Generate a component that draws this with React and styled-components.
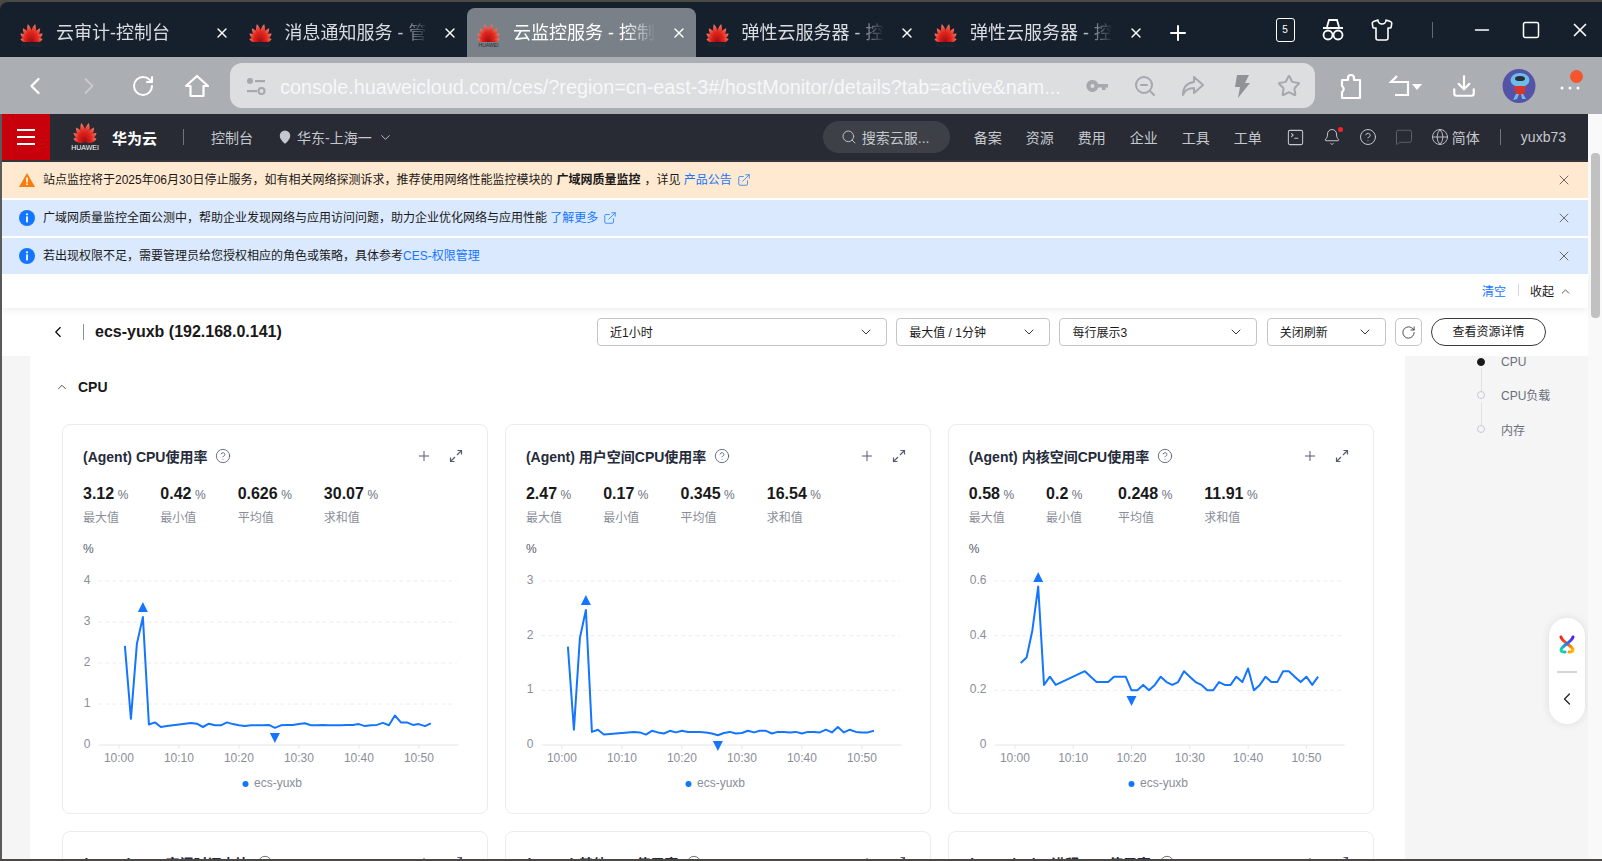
import React from "react";
import styled, { createGlobalStyle } from "styled-components";
import {
  ChevronLeft, ChevronRight, ChevronDown, ChevronUp, RotateCw, ZoomOut, Star,
  Download, Search, MapPin, SquareTerminal, Bell, CircleHelp, Globe, X, Plus, Minus, Square,
  ExternalLink, Shirt, MessageSquare,
} from "lucide-react";

const FONT = `"Liberation Sans", "Noto Sans CJK SC", sans-serif`;

const GlobalStyle = createGlobalStyle`
  html, body { margin: 0; padding: 0; background: #4a4845; }
  body { font-family: ${FONT}; overflow: hidden; }
  * { box-sizing: border-box; }
`;

const Window = styled.div`
  width: 1602px;
  height: 861px;
  overflow: hidden;
  padding: 2px 0;
  display: flex;
  flex-direction: column;
`;

const TabBar = styled.div`
  height: 55px;
  flex: none;
  display: flex;
  align-items: flex-end;
  padding-left: 10px;
  background: #16202d;
  border-top-left-radius: 8px;
`;

const Tab = styled.div`
  width: 228.5px;
  height: 49px;
  flex: none;
  display: flex;
  align-items: center;
  padding: 0 9px 0 9px;
  border-radius: 8px 8px 0 0;
  background: ${(p) => (p.$active ? "#7a8087" : "transparent")};
  color: ${(p) => (p.$active ? "#ffffff" : "#d9dce0")};
`;

const TabLogo = styled.div`
  width: 25px;
  padding-top: 6px;
  display: flex;
  flex-direction: column;
  align-items: center;
  color: #2b2b33;
`;

const TabWord = styled.span`
  font-size: 5px;
  line-height: 6px;
  white-space: nowrap;
`;

const TabTitle = styled.div`
  width: 146px;
  margin-left: 12px;
  font-size: 18px;
  line-height: 26px;
  white-space: nowrap;
  -webkit-mask-image: linear-gradient(to right, #000 76%, transparent 98%);
  mask-image: linear-gradient(to right, #000 76%, transparent 98%);
`;

const TabClose = styled.div`
  margin-left: auto;
  display: flex;
  color: #fff;
`;

const NewTab = styled.div`
  margin-left: 13px;
  height: 49px;
  display: flex;
  align-items: center;
  color: #fff;
`;

const WindowButtons = styled.div`
  margin-left: auto;
  margin-right: -2px;
  height: 55px;
  display: flex;
  align-items: center;
  color: #fff;
`;

const WinButton = styled.div`
  width: ${(p) => p.$w || 50}px;
  display: flex;
  justify-content: center;
`;

const BadgeTab = styled.div`
  width: 19px;
  height: 24px;
  border: 1.5px solid #fff;
  border-radius: 3px;
  font-size: 10px;
  line-height: 21px;
  text-align: center;
`;

const WinSep = styled.div`
  width: 1px;
  height: 16px;
  background: #667;
`;

const ToolBar = styled.div`
  height: 57px;
  flex: none;
  display: flex;
  align-items: center;
  padding-left: 8px;
  background: #abaeb2;
  color: #fff;
`;

const NavButton = styled.div`
  width: ${(p) => p.$w || 54}px;
  display: flex;
  justify-content: center;
  color: ${(p) => (p.$dim ? "#c8cacd" : "#fff")};
`;

const AddressBar = styled.div`
  width: 1085px;
  height: 45px;
  margin: 0 10px 0 6px;
  padding: 0 14px 0 16px;
  flex: none;
  display: flex;
  align-items: center;
  border-radius: 12px;
  background: #dcdee0;
`;

const UrlText = styled.div`
  margin-left: 14px;
  padding-top: 3px;
  width: 795px;
  flex: none;
  font-size: 19.8px;
  color: #f7f8f9;
  white-space: nowrap;
`;

const AddressIcons = styled.div`
  margin-left: auto;
  display: flex;
  align-items: center;
  gap: 24px;
  color: #a5a8ac;
`;

const Avatar = styled.svg`
  width: 34px;
  height: 34px;
  margin: 0 21px 0 7px;
`;

const MenuDots = styled.div`
  position: relative;
  width: 28px;
  height: 28px;
`;

const MenuDot = styled.span`
  position: absolute;
  right: 2px;
  top: -2px;
  width: 13px;
  height: 13px;
  border-radius: 50%;
  background: #f4552a;
`;

const Page = styled.div`
  flex: 1;
  min-height: 0;
  display: flex;
  background: #fff;
`;

const Gutter = styled.div`
  width: 2px;
  flex: none;
  background: #5a5a5a;
`;

const Main = styled.div`
  width: 1586px;
  flex: none;
  display: flex;
  flex-direction: column;
  min-height: 0;
`;

const ScrollTrack = styled.div`
  width: 14px;
  flex: none;
  background: #f9f9f9;
  padding: 39px 2px 0 3px;
`;

const ScrollThumb = styled.div`
  height: 165px;
  border-radius: 4px;
  background: #c1c1c1;
`;

const Header = styled.header`
  height: 48px;
  flex: none;
  display: flex;
  align-items: center;
  padding-right: 22px;
  background: #282b33;
  border-bottom: 2px solid #33353b;
  color: #c5c8ce;
  font-size: 14px;
`;

const MenuBox = styled.div`
  width: 48px;
  height: 46px;
  display: flex;
  align-items: center;
  justify-content: center;
  background: #c7000b;
  color: #fff;
`;

const HeaderLogo = styled.div`
  margin-left: 21px;
  width: 28px;
  display: flex;
  flex-direction: column;
  align-items: center;
  color: #fff;
`;

const LogoWord = styled.span`
  font-size: 7px;
  line-height: 9px;
  white-space: nowrap;
`;

const Brand = styled.div`
  margin-left: 13px;
  font-size: 15px;
  font-weight: 700;
  color: #fff;
`;

const HeaderDivider = styled.div`
  width: 1px;
  height: 16px;
  margin: ${(p) => p.$m || "0 27px 0 26px"};
  background: #70737a;
`;

const Region = styled.div`
  margin-left: 25px;
  display: flex;
  align-items: center;
  gap: 5px;
`;

const RegionCaret = styled(ChevronDown)`
  margin-left: 1px;
`;

const SearchPill = styled.div`
  margin-left: auto;
  width: 127px;
  height: 32px;
  display: flex;
  align-items: center;
  gap: 5px;
  padding-left: 18px;
  border-radius: 16px;
  background: #3d4047;
`;

const NavLinks = styled.nav`
  margin-left: 24px;
  display: flex;
  gap: 24px;
`;

const HeaderIcons = styled.div`
  margin-left: 24px;
  display: flex;
  align-items: center;
  gap: 18px;
`;

const BellWrap = styled.div`
  position: relative;
  display: flex;
`;

const RedDot = styled.span`
  position: absolute;
  top: -1px;
  right: -2px;
  width: 5px;
  height: 5px;
  border-radius: 50%;
  background: #f5222d;
`;

const DimIcon = styled.div`
  display: flex;
  color: #5f626a;
`;

const LangSwitch = styled.div`
  margin-left: 18px;
  display: flex;
  align-items: center;
  gap: 3px;
`;

const Banner = styled.div`
  height: 36px;
  flex: none;
  display: flex;
  align-items: center;
  margin-bottom: 2px;
  padding: 0 16px 0 17px;
  background: ${(p) => (p.$warn ? "#ffe9d0" : "#dbe9fe")};
  color: #191919;
  font-size: 12px;
`;

const BannerText = styled.div`
  margin-left: 8px;
  padding-bottom: 3px;
  white-space: nowrap;
  display: flex;
  align-items: center;
`;

const Strong = styled.b`
  font-weight: 700;
  margin: 0 4px;
`;

const BannerLink = styled.span`
  color: #1476ff;
`;

const LinkIcon = styled(ExternalLink)`
  margin: 2px 0 0 5px;
  color: #1476ff;
`;

const BannerClose = styled.div`
  margin-left: auto;
  display: flex;
  color: #555;
`;

const ClearRow = styled.div`
  height: 34px;
  margin-top: -2px;
  flex: none;
  display: flex;
  align-items: center;
  justify-content: flex-end;
  padding: 0 16px 2px 0;
  font-size: 12px;
  color: #191919;
  background: #fff;
  box-shadow: 0 3px 6px rgba(0, 0, 0, 0.06);
  position: relative;
  z-index: 1;
`;

const ClearLink = styled.span`
  color: #1476ff;
`;

const ClearSep = styled.span`
  width: 1px;
  height: 12px;
  margin: 0 11px 0 12px;
  background: #d5d7da;
`;

const ClearCaret = styled(ChevronUp)`
  margin: 2px 0 0 5px;
`;

const TitleBar = styled.div`
  height: 48px;
  flex: none;
  display: flex;
  align-items: center;
  padding: 0 42px 0 47px;
  background: #fff;
`;

const TitleSep = styled.div`
  width: 1px;
  height: 16px;
  margin: 0 11px 0 16px;
  background: #8a8e99;
`;

const PageTitle = styled.div`
  font-size: 16px;
  font-weight: 700;
  color: #191919;
`;

const Filters = styled.div`
  margin-left: auto;
  display: flex;
  align-items: center;
  gap: 9.2px;
`;

const Select = styled.div`
  width: ${(p) => p.$w}px;
  height: 28px;
  display: flex;
  align-items: center;
  justify-content: space-between;
  padding: 0 12px;
  border: 1px solid #c3c5ca;
  border-radius: 4px;
  font-size: 12px;
  color: #191919;
`;

const SelectLabel = styled.span`
  padding-bottom: 2px;
`;

const RefreshButton = styled.div`
  width: 27px;
  height: 28px;
  display: flex;
  align-items: center;
  justify-content: center;
  border: 1px solid #c3c5ca;
  border-radius: 5px;
  color: #333;
`;

const DetailButton = styled.div`
  width: 115px;
  height: 28px;
  text-align: center;
  line-height: 26px;
  border: 1px solid #3a3a3a;
  border-radius: 14px;
  font-size: 12px;
  color: #191919;
`;

const Body = styled.div`
  flex: 1;
  min-height: 0;
  display: flex;
  overflow: hidden;
  background: #f5f5f5;
`;

const Content = styled.div`
  width: 1375px;
  margin-left: 28px;
  flex: none;
  padding: 0 31px 0 32px;
  background: #fff;
`;

const SectionHead = styled.div`
  height: 68px;
  padding-bottom: 6px;
  margin-left: -7px;
  display: flex;
  align-items: center;
  gap: 9px;
  font-size: 14px;
  font-weight: 700;
  color: #191919;
`;

const CardGrid = styled.div`
  display: grid;
  grid-template-columns: repeat(3, 1fr);
  gap: 16.5px 16.7px;
`;

const Card = styled.div`
  height: 390px;
  padding: 19px 0 0 20px;
  border: 1px solid #eaecf0;
  border-radius: 8px;
  background: #fff;
`;

const CardHead = styled.div`
  height: 24px;
  display: flex;
  align-items: center;
  padding-right: 24px;
  font-size: 14px;
  font-weight: 700;
  color: #252b3a;
`;

const HelpIcon = styled(CircleHelp)`
  margin-left: 8px;
  color: #575d6c;
`;

const CardActions = styled.div`
  margin-left: auto;
  display: flex;
  align-items: center;
  gap: 17px;
  color: #575d6c;
`;

const Stats = styled.div`
  display: flex;
  gap: 32px;
  margin-top: 14px;
`;

const Stat = styled.div`
  min-width: 40px;
`;

const StatValue = styled.div`
  font-size: 16px;
  line-height: 24px;
  font-weight: 700;
  color: #191919;
  white-space: nowrap;
`;

const StatUnit = styled.span`
  margin-left: 3.5px;
  font-size: 12px;
  font-weight: 400;
  color: #6a6f7c;
`;

const StatLabel = styled.div`
  font-size: 12px;
  line-height: 22px;
  color: #8a8e99;
`;

const ChartUnit = styled.div`
  margin-top: 12px;
  font-size: 12px;
  line-height: 16px;
  color: #575d6c;
`;

const ChartSvg = styled.svg`
  display: block;
  width: 400px;
  height: 256px;
  margin: -1px 0 0 1px;
`;

const AxisLabel = styled.text`
  font-family: ${FONT};
  font-size: 12px;
  fill: #8a8e99;
`;

const SideNav = styled.aside`
  width: 183px;
  flex: none;
  padding-left: 72px;
  display: flex;
  flex-direction: column;
  font-size: 12px;
  color: #6a6f7c;
  position: relative;
`;

const AnchorRow = styled.div`
  height: 34.3px;
  display: flex;
  align-items: center;
  gap: 16px;
  margin-top: ${(p) => (p.$first ? "-11px" : "0")};
  padding-bottom: ${(p) => (p.$first ? "0" : "3px")};
  position: relative;
`;

const AnchorDot = styled.span`
  width: 8px;
  height: 8px;
  flex: none;
  border-radius: 50%;
  background: ${(p) => (p.$on ? "#191919" : "#f5f5f5")};
  border: 1px solid ${(p) => (p.$on ? "#191919" : "#c8cad0")};
`;

const AnchorLine = styled.span`
  position: absolute;
  left: 3.5px;
  top: 23px;
  width: 1px;
  height: 23px;
  background: #dfe1e6;
`;

const FloatPill = styled.div`
  position: absolute;
  right: 3px;
  top: 262px;
  width: 36px;
  height: 106px;
  display: flex;
  flex-direction: column;
  align-items: center;
  border-radius: 18px;
  background: #fff;
  box-shadow: 0 0 8px rgba(0, 0, 0, 0.1);
  color: #222;
`;

const PillLogo = styled.svg`
  margin-top: 16px;
`;

const PillSep = styled.div`
  width: 20px;
  height: 2px;
  margin: 17px 0 16px;
  background: #d5d5d5;
`;

const Logo = ({ size = 26 }) => {
  const petals = [
    [-70, 0.66, 1], [-49, 0.8, 1], [-29, 0.94, 1], [-9, 1.06, 1],
    [9, 1.06, -1], [29, 0.94, -1], [49, 0.8, -1], [70, 0.66, -1],
  ];
  return (
    <svg width={size} height={size * 0.78} viewBox="0 0 100 78">
      <defs>
        <linearGradient id="petal" x1="0" y1="0" x2="0" y2="1">
          <stop offset="0" stopColor="#f4806a" />
          <stop offset="0.45" stopColor="#e3251d" />
          <stop offset="1" stopColor="#9c0d10" />
        </linearGradient>
      </defs>
      {petals.map(([a, s, side]) => (
        <path
          key={a}
          d={`M0 0C-15 ${-24 * s} -13 ${-52 * s} -3 ${-70 * s}C11 ${-52 * s} 12 ${-24 * s} 0 0Z`}
          transform={`translate(50 77) rotate(${a}) scale(${side} 1)`}
          fill="url(#petal)"
        />
      ))}
    </svg>
  );
};

const tabs = [
  "云审计-控制台",
  "消息通知服务 - 管",
  "云监控服务 - 控制",
  "弹性云服务器 - 控",
  "弹性云服务器 - 控",
];

const minutes = ["10:00", "10:10", "10:20", "10:30", "10:40", "10:50"];

const charts = [
  {
    title: "(Agent) CPU使用率",
    stats: ["3.12", "0.42", "0.626", "30.07"],
    yMax: 4, yTicks: ["0", "1", "2", "3", "4"],
    axisLeft: 14.4, axisLen: 360.3, perMin: 6,
    maxMark: [4, 602], minMark: [26, 733],
    values: [2.42, 0.64, 2.47, 3.12, 0.5, 0.55, 0.44, 0.46, 0.48, 0.5, 0.52, 0.54, 0.52, 0.44, 0.52, 0.48, 0.48, 0.55, 0.51, 0.48, 0.46, 0.48, 0.48, 0.48, 0.49, 0.42, 0.48, 0.49, 0.49, 0.51, 0.53, 0.48, 0.48, 0.49, 0.48, 0.48, 0.48, 0.49, 0.49, 0.51, 0.46, 0.48, 0.49, 0.54, 0.48, 0.72, 0.55, 0.55, 0.49, 0.51, 0.46, 0.53],
  },
  {
    title: "(Agent) 用户空间CPU使用率",
    stats: ["2.47", "0.17", "0.345", "16.54"],
    yMax: 3, yTicks: ["0", "1", "2", "3"],
    axisLeft: 14.4, axisLen: 360.3, perMin: 6,
    maxMark: [4, 595], minMark: [26, 741],
    values: [1.8, 0.28, 1.96, 2.47, 0.24, 0.28, 0.19, 0.2, 0.21, 0.22, 0.23, 0.24, 0.23, 0.19, 0.26, 0.23, 0.21, 0.26, 0.23, 0.26, 0.24, 0.24, 0.24, 0.23, 0.21, 0.18, 0.22, 0.24, 0.21, 0.22, 0.26, 0.23, 0.26, 0.26, 0.21, 0.24, 0.24, 0.23, 0.24, 0.21, 0.24, 0.24, 0.23, 0.28, 0.23, 0.33, 0.23, 0.28, 0.24, 0.23, 0.23, 0.26],
  },
  {
    title: "(Agent) 内核空间CPU使用率",
    stats: ["0.58", "0.2", "0.248", "11.91"],
    yMax: 0.6, yTicks: ["0", "0.2", "0.4", "0.6"],
    axisLeft: 24.4, axisLen: 350.3, perMin: 5.83,
    maxMark: [4, 572], minMark: [20, 696],
    values: [0.3, 0.32, 0.42, 0.58, 0.22, 0.25, 0.22, 0.23, 0.24, 0.25, 0.26, 0.27, 0.25, 0.23, 0.23, 0.23, 0.25, 0.25, 0.25, 0.2, 0.2, 0.22, 0.2, 0.22, 0.25, 0.23, 0.22, 0.23, 0.27, 0.25, 0.23, 0.22, 0.2, 0.2, 0.23, 0.22, 0.22, 0.25, 0.23, 0.28, 0.2, 0.22, 0.25, 0.23, 0.23, 0.27, 0.27, 0.25, 0.23, 0.25, 0.22, 0.25],
  },
];

const statLabels = ["最大值", "最小值", "平均值", "求和值"];
const lowerTitles = ["(Agent) CPU空闲时间占比", "(Agent) 其他CPU使用率", "(Agent) Nice进程CPU使用率"];

// chart svg starts at page y 556, everything below is local to it
const TOP = 556;
const ZERO = 745 - TOP;
const GRID_TOP = 581 - TOP;

const Chart = ({ c }) => {
  const x0 = c.axisLeft + 20.5;
  const xOf = (m) => x0 + m * c.perMin;
  const yOf = (v) => ZERO - (v / c.yMax) * (ZERO - GRID_TOP);
  const points = c.values.map((v, i) => `${xOf(i + 1).toFixed(1)},${yOf(v).toFixed(1)}`).join(" ");
  const maxX = xOf(c.maxMark[0]);
  const maxY = c.maxMark[1] - TOP;
  const minX = xOf(c.minMark[0]);
  const minY = c.minMark[1] - TOP;
  return (
    <ChartSvg viewBox="0 0 400 256">
      {c.yTicks.map((t, i) => {
        const y = yOf((i / (c.yTicks.length - 1)) * c.yMax);
        return (
          <g key={t}>
            <AxisLabel x={c.axisLeft - 8} y={y + 3} textAnchor="end">{t}</AxisLabel>
            <line
              x1={c.axisLeft}
              x2={c.axisLeft + c.axisLen - (i ? 2 : 0)}
              y1={y}
              y2={y}
              stroke={i ? "#ececec" : "#e6e6e6"}
              strokeDasharray={i ? "4 3" : "none"}
            />
          </g>
        );
      })}
      {minutes.map((t, i) => (
        <g key={t}>
          <line x1={xOf(i * 10)} x2={xOf(i * 10)} y1={ZERO} y2={ZERO + 4} stroke="#e6e6e6" />
          <AxisLabel x={xOf(i * 10)} y={ZERO + 17} textAnchor="middle">{t}</AxisLabel>
        </g>
      ))}
      <polyline points={points} fill="none" stroke="#1476ff" strokeWidth="2" strokeLinejoin="round" />
      <path d={`M${maxX} ${maxY}l5 10h-10z`} fill="#1476ff" />
      <path d={`M${minX} ${minY + 10}l5 -10h-10z`} fill="#1476ff" />
      <circle cx={161.5} cy={ZERO + 39} r="3" fill="#1476ff" />
      <AxisLabel x={170} y={ZERO + 42}>ecs-yuxb</AxisLabel>
    </ChartSvg>
  );
};

const CardTop = ({ title }) => (
  <CardHead>
    {title}
    <HelpIcon size={16} strokeWidth={1.3} />
    <CardActions>
      <Plus size={16} strokeWidth={1.5} />
      <svg width="14" height="14" viewBox="0 0 14 14" fill="none" stroke="currentColor" strokeWidth="1.2">
        <path d="M8.5 1.5h4v4M12.5 1.5l-4.5 4.5M5.5 12.5h-4v-4M1.5 12.5l4.5-4.5" />
      </svg>
    </CardActions>
  </CardHead>
);

const MetricCard = ({ c }) => (
  <Card>
    <CardTop title={c.title} />
    <Stats>
      {c.stats.map((s, i) => (
        <Stat key={statLabels[i]}>
          <StatValue>{s}<StatUnit>%</StatUnit></StatValue>
          <StatLabel>{statLabels[i]}</StatLabel>
        </Stat>
      ))}
    </Stats>
    <ChartUnit>%</ChartUnit>
    <Chart c={c} />
  </Card>
);

function InfoDot() {
  return (
    <svg width="16" height="16" viewBox="0 0 16 16">
      <circle cx="8" cy="8" r="8" fill="#1476ff" />
      <rect x="7.1" y="3.4" width="1.8" height="1.8" fill="#fff" />
      <rect x="7.1" y="6.4" width="1.8" height="6" fill="#fff" />
    </svg>
  );
}

const App = () => (
  <>
    <GlobalStyle />
    <Window>
      <TabBar>
        {tabs.map((t, i) => (
          <Tab key={i} $active={i === 2}>
            <TabLogo>
              <Logo size={25} />
              <TabWord>HUAWEI</TabWord>
            </TabLogo>
            <TabTitle>{t}</TabTitle>
            <TabClose><X size={16} strokeWidth={2} /></TabClose>
          </Tab>
        ))}
        <NewTab><Plus size={24} strokeWidth={2} /></NewTab>
        <WindowButtons>
          <WinButton $w={48}><BadgeTab>5</BadgeTab></WinButton>
          <WinButton $w={48}>
            <svg width="26" height="24" viewBox="0 0 26 24" fill="none" stroke="#fff" strokeWidth="1.8">
              <path d="M7 9l2-7h8l2 7M3 10h20" />
              <circle cx="8" cy="17" r="4.5" />
              <circle cx="18" cy="17" r="4.5" />
              <path d="M12.5 17h1" />
            </svg>
          </WinButton>
          <WinButton $w={50}><Shirt size={24} strokeWidth={1.6} /></WinButton>
          <WinButton $w={50}><WinSep /></WinButton>
          <WinButton $w={49}><Minus size={22} strokeWidth={1.8} /></WinButton>
          <WinButton $w={50}><Square size={20} strokeWidth={1.8} /></WinButton>
          <WinButton $w={48}><X size={22} strokeWidth={1.8} /></WinButton>
        </WindowButtons>
      </TabBar>

      <ToolBar>
        <NavButton><ChevronLeft size={28} strokeWidth={2} /></NavButton>
        <NavButton $dim><ChevronRight size={28} strokeWidth={1.6} /></NavButton>
        <NavButton><RotateCw size={24} strokeWidth={2} /></NavButton>
        <NavButton>
          <svg width="26" height="26" viewBox="0 0 26 26" fill="none" stroke="#fff" strokeWidth="2.2" strokeLinejoin="round">
            <path d="M2 13L13 3l11 10h-4.5v10h-13V13z" />
          </svg>
        </NavButton>
        <AddressBar>
          <svg width="20" height="20" viewBox="0 0 20 20" fill="#a5a8ac">
            <circle cx="4" cy="5" r="3" />
            <rect x="9" y="4" width="10" height="2.2" />
            <rect x="1" y="14" width="10" height="2.2" />
            <circle cx="15.5" cy="15" r="3" fill="none" stroke="#a5a8ac" strokeWidth="2" />
          </svg>
          <UrlText>console.huaweicloud.com/ces/?region=cn-east-3#/hostMonitor/details?tab=active&amp;nam...</UrlText>
          <AddressIcons>
            <svg width="24" height="24" viewBox="0 0 24 24" fill="#a5a8ac">
              <path d="M7.5 6a6 6 0 0 1 5.6 4H23v3.5h-2.5V16H17v-2.5h-3.9A6 6 0 1 1 7.5 6zm0 4a2 2 0 1 0 0 4 2 2 0 0 0 0-4z" fillRule="evenodd" />
            </svg>
            <ZoomOut size={24} strokeWidth={2} />
            <svg width="24" height="24" viewBox="0 0 24 24" fill="none" stroke="#a5a8ac" strokeWidth="2" strokeLinejoin="round">
              <path d="M13 3l9 8-9 8v-5C8 14 4 16 2 21c0-8 4-12 11-13z" />
            </svg>
            <svg width="24" height="24" viewBox="0 0 24 24" fill="#8f9296">
              <path d="M8 1h12l-4 8h5L9 24l2-11H6z" />
            </svg>
            <Star size={24} strokeWidth={2} />
          </AddressIcons>
        </AddressBar>
        <NavButton $w={52}>
          <svg width="26" height="28" viewBox="0 0 26 28" fill="none" stroke="#fff" strokeWidth="2.2" strokeLinejoin="round">
            <path d="M4 8h6V6a3 3 0 0 1 6 0v2h6v18H4v-6a3.5 3.5 0 0 0 0-6z" />
          </svg>
        </NavButton>
        <NavButton $w={56}>
          <svg width="24" height="26" viewBox="0 0 24 26" fill="none" stroke="#fff" strokeWidth="2.2">
            <path d="M9 3L3 9h17v13H7" />
          </svg>
          <svg width="10" height="26" viewBox="0 0 10 26" fill="#fff"><path d="M0 11h10l-5 6z" /></svg>
        </NavButton>
        <NavButton $w={62}><Download size={26} strokeWidth={2} /></NavButton>
        <Avatar viewBox="0 0 34 34">
          <ellipse cx="17" cy="17" rx="16.5" ry="17" fill="#5553a8" />
          <ellipse cx="18" cy="11" rx="9.5" ry="7" fill="#6cbde8" />
          <ellipse cx="18" cy="9.5" rx="5" ry="2.6" fill="#2b2b3a" />
          <path d="M12 17h12l-2 9h-8z" fill="#d8352c" />
          <path d="M14 25l-3 6 4-1 2-5zM21 25l3 5-4 0-1-5z" fill="#6cbde8" />
        </Avatar>
        <MenuDots>
          <svg width="28" height="28" viewBox="0 0 28 28" fill="#fff">
            <circle cx="5" cy="16" r="1.5" />
            <circle cx="13" cy="16" r="1.5" />
            <circle cx="21" cy="16" r="1.5" />
          </svg>
          <MenuDot />
        </MenuDots>
      </ToolBar>

      <Page>
        <Gutter />
        <Main>
          <Header>
            <MenuBox>
              <svg width="18" height="16" viewBox="0 0 18 16" fill="#fff">
                <rect y="0" width="18" height="2" />
                <rect y="7" width="18" height="2" />
                <rect y="14" width="18" height="2" />
              </svg>
            </MenuBox>
            <HeaderLogo>
              <Logo size={26} />
              <LogoWord>HUAWEI</LogoWord>
            </HeaderLogo>
            <Brand>华为云</Brand>
            <HeaderDivider />
            <span>控制台</span>
            <Region>
              <MapPin size={14} fill="#c5c8ce" stroke="#c5c8ce" />
              华东-上海一
              <RegionCaret size={15} strokeWidth={1.5} />
            </Region>
            <SearchPill>
              <Search size={16} strokeWidth={1.4} />
              搜索云服...
            </SearchPill>
            <NavLinks>
              <span>备案</span><span>资源</span><span>费用</span>
              <span>企业</span><span>工具</span><span>工单</span>
            </NavLinks>
            <HeaderIcons>
              <SquareTerminal size={19} strokeWidth={1.3} />
              <BellWrap>
                <Bell size={18} strokeWidth={1.3} />
                <RedDot />
              </BellWrap>
              <CircleHelp size={18} strokeWidth={1.3} />
              <DimIcon><MessageSquare size={18} strokeWidth={1.3} /></DimIcon>
            </HeaderIcons>
            <LangSwitch>
              <Globe size={18} strokeWidth={1.2} />
              简体
            </LangSwitch>
            <HeaderDivider $m="0 20px" />
            <span>yuxb73</span>
          </Header>

          <Banner $warn>
            <svg width="16" height="14" viewBox="0 0 16 14">
              <path d="M8 0l8 14H0z" fill="#f97b0b" />
              <rect x="7.2" y="4.5" width="1.6" height="5" fill="#fff" />
              <rect x="7.2" y="10.5" width="1.6" height="1.6" fill="#fff" />
            </svg>
            <BannerText>
              站点监控将于2025年06月30日停止服务，如有相关网络探测诉求，推荐使用网络性能监控模块的<Strong>广域网质量监控</Strong>，详见&nbsp;
              <BannerLink>产品公告</BannerLink>
              <LinkIcon size={14} strokeWidth={1.3} />
            </BannerText>
            <BannerClose><X size={16} strokeWidth={1.3} /></BannerClose>
          </Banner>
          <Banner>
            <InfoDot />
            <BannerText>
              广域网质量监控全面公测中，帮助企业发现网络与应用访问问题，助力企业优化网络与应用性能&nbsp;
              <BannerLink>了解更多</BannerLink>
              <LinkIcon size={14} strokeWidth={1.3} />
            </BannerText>
            <BannerClose><X size={16} strokeWidth={1.3} /></BannerClose>
          </Banner>
          <Banner>
            <InfoDot />
            <BannerText>
              若出现权限不足，需要管理员给您授权相应的角色或策略，具体参考<BannerLink>CES-权限管理</BannerLink>
            </BannerText>
            <BannerClose><X size={16} strokeWidth={1.3} /></BannerClose>
          </Banner>

          <ClearRow>
            <ClearLink>清空</ClearLink>
            <ClearSep />
            收起
            <ClearCaret size={13} strokeWidth={1.3} />
          </ClearRow>

          <TitleBar>
            <ChevronLeft size={18} strokeWidth={1.5} />
            <TitleSep />
            <PageTitle>ecs-yuxb (192.168.0.141)</PageTitle>
            <Filters>
              <Select $w={290}><SelectLabel>近1小时</SelectLabel><ChevronDown size={16} strokeWidth={1.3} /></Select>
              <Select $w={154}><SelectLabel>最大值 / 1分钟</SelectLabel><ChevronDown size={16} strokeWidth={1.3} /></Select>
              <Select $w={198}><SelectLabel>每行展示3</SelectLabel><ChevronDown size={16} strokeWidth={1.3} /></Select>
              <Select $w={119}><SelectLabel>关闭刷新</SelectLabel><ChevronDown size={16} strokeWidth={1.3} /></Select>
              <RefreshButton><RotateCw size={15} strokeWidth={1.4} /></RefreshButton>
              <DetailButton>查看资源详情</DetailButton>
            </Filters>
          </TitleBar>

          <Body>
            <Content>
              <SectionHead>
                <ChevronUp size={14} strokeWidth={1.3} />
                CPU
              </SectionHead>
              <CardGrid>
                {charts.map((c) => <MetricCard key={c.title} c={c} />)}
                {lowerTitles.map((t) => (
                  <Card key={t}><CardTop title={t} /></Card>
                ))}
              </CardGrid>
            </Content>
            <SideNav>
              <AnchorRow $first><AnchorDot $on />CPU<AnchorLine /></AnchorRow>
              <AnchorRow><AnchorDot />CPU负载<AnchorLine /></AnchorRow>
              <AnchorRow><AnchorDot />内存</AnchorRow>
              <FloatPill>
                <PillLogo width="18" height="20" viewBox="0 0 18 20" fill="none" strokeWidth="3" strokeLinecap="round">
                  <defs>
                    <linearGradient id="ribbonA" x1="0" y1="0" x2="1" y2="1">
                      <stop offset="0" stopColor="#f0261c" />
                      <stop offset="0.6" stopColor="#ff6a00" />
                      <stop offset="1" stopColor="#ffc400" />
                    </linearGradient>
                    <linearGradient id="ribbonB" x1="1" y1="0" x2="0" y2="1">
                      <stop offset="0" stopColor="#5a16f0" />
                      <stop offset="0.5" stopColor="#1f7cf2" />
                      <stop offset="1" stopColor="#18e0a0" />
                    </linearGradient>
                    <linearGradient id="ribbonC" x1="0" y1="0" x2="1" y2="0">
                      <stop offset="0" stopColor="#e8103c" />
                      <stop offset="1" stopColor="#6a14e8" />
                    </linearGradient>
                  </defs>
                  <path d="M3 3C4 8 15 12 15 16c0 2-2 2-4 2" stroke="url(#ribbonA)" />
                  <path d="M15 3C14 8 3 12 3 16c0 2 2 2 4 2" stroke="url(#ribbonB)" />
                  <path d="M3 2.5h12" stroke="url(#ribbonC)" />
                </PillLogo>
                <PillSep />
                <ChevronLeft size={20} strokeWidth={1.5} />
              </FloatPill>
            </SideNav>
          </Body>
        </Main>
        <ScrollTrack><ScrollThumb /></ScrollTrack>
      </Page>
    </Window>
  </>
);

export default App;
